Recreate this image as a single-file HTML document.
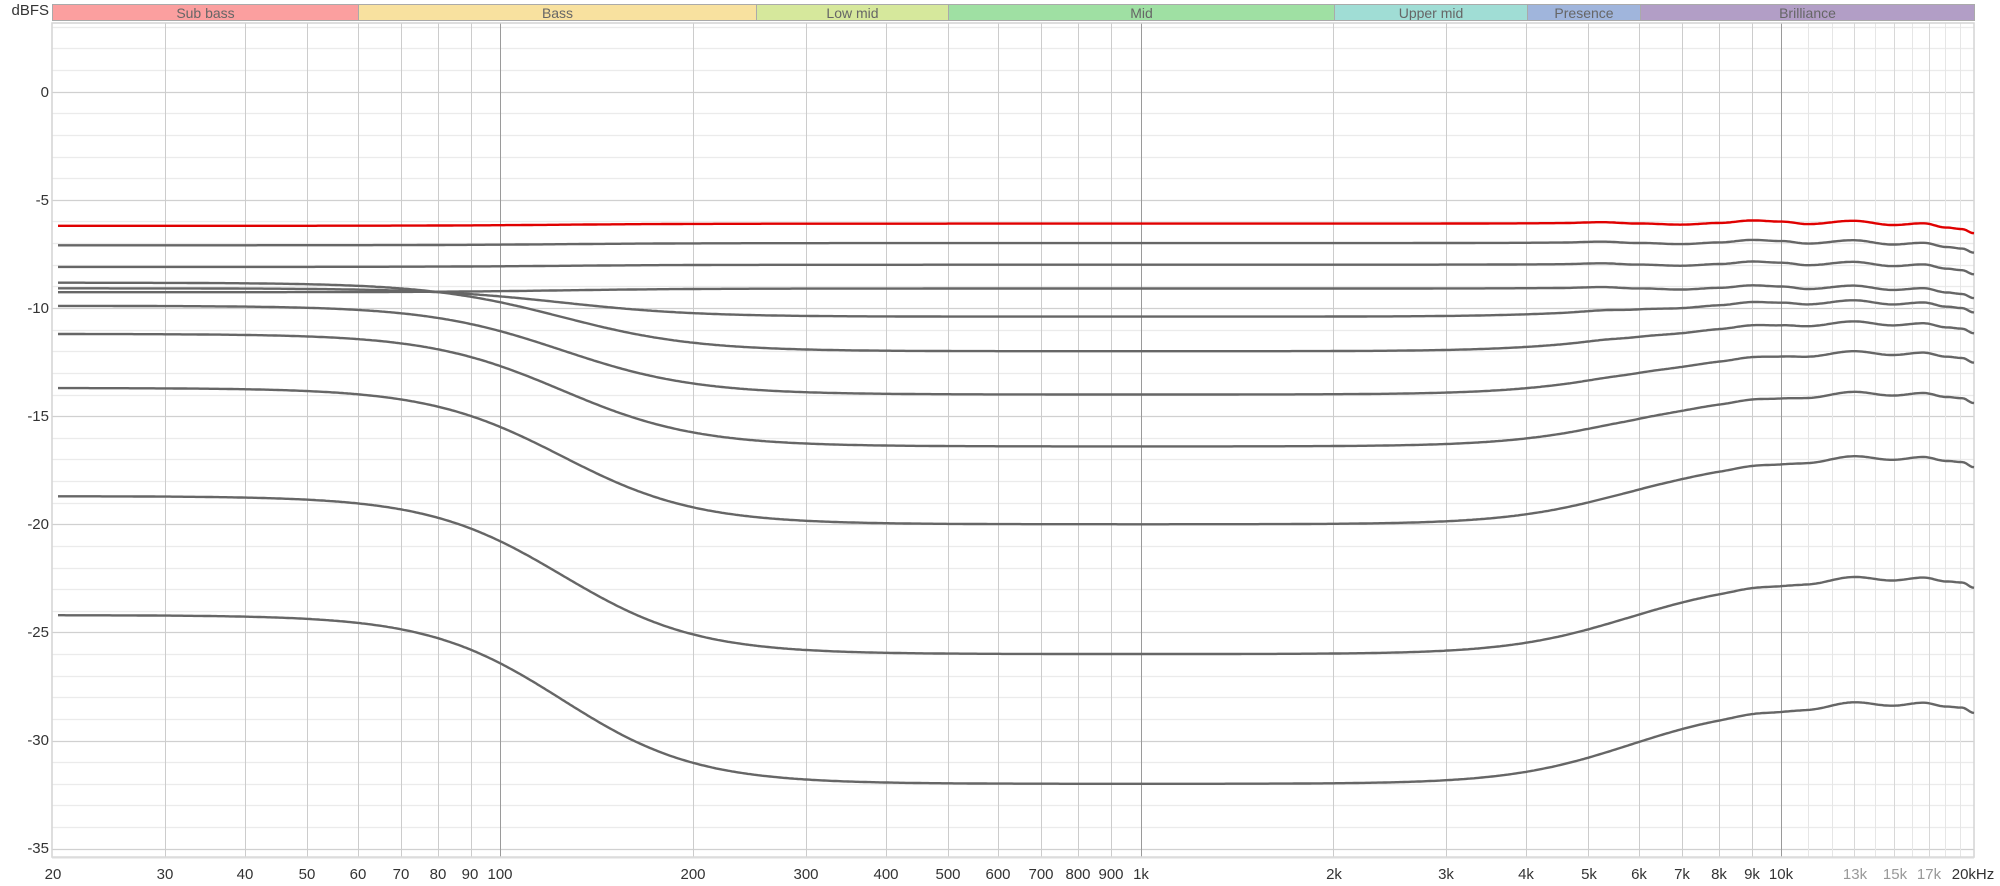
<!DOCTYPE html>
<html><head><meta charset="utf-8">
<style>
html,body{margin:0;padding:0;background:#fff;}
body{width:2000px;height:886px;position:relative;overflow:hidden;font-family:"Liberation Sans",sans-serif;}
.yl{position:absolute;right:1951px;font-size:15px;color:#333;line-height:16px;text-align:right;white-space:nowrap}
.xl{position:absolute;top:866px;font-size:15px;color:#333;line-height:18px;transform:translateX(-50%);white-space:nowrap}
.g{color:#999}
.band{position:absolute;top:4px;height:15px;border:1px solid #aaa;box-sizing:content-box;font-size:14px;color:#666;text-align:center;line-height:16px;overflow:hidden}
svg{position:absolute;left:0;top:0}
</style></head><body>
<svg id="s" width="2000" height="886" viewBox="0 0 2000 886"></svg>
<div class="yl" style="top:3px">dBFS</div>
<div class="yl" style="top:85px">0</div>
<div class="yl" style="top:193px">-5</div>
<div class="yl" style="top:301px">-10</div>
<div class="yl" style="top:409px">-15</div>
<div class="yl" style="top:517px">-20</div>
<div class="yl" style="top:625px">-25</div>
<div class="yl" style="top:733px">-30</div>
<div class="yl" style="top:841px">-35</div>

<div class="band" style="left:52px;width:305px;background:#fb9f9f">Sub bass</div>
<div class="band" style="left:358px;width:397px;background:#f8e19f">Bass</div>
<div class="band" style="left:756px;width:191px;background:#d6e89c">Low mid</div>
<div class="band" style="left:948px;width:385px;background:#9fe0a3">Mid</div>
<div class="band" style="left:1334px;width:192px;background:#a0ddd5">Upper mid</div>
<div class="band" style="left:1527px;width:112px;background:#a0b5dc">Presence</div>
<div class="band" style="left:1640px;width:333px;background:#b29ec6">Brilliance</div>

<div class="xl" style="left:53px">20</div>
<div class="xl" style="left:165px">30</div>
<div class="xl" style="left:245px">40</div>
<div class="xl" style="left:307px">50</div>
<div class="xl" style="left:358px">60</div>
<div class="xl" style="left:401px">70</div>
<div class="xl" style="left:438px">80</div>
<div class="xl" style="left:470px">90</div>
<div class="xl" style="left:500px">100</div>
<div class="xl" style="left:693px">200</div>
<div class="xl" style="left:806px">300</div>
<div class="xl" style="left:886px">400</div>
<div class="xl" style="left:948px">500</div>
<div class="xl" style="left:998px">600</div>
<div class="xl" style="left:1041px">700</div>
<div class="xl" style="left:1078px">800</div>
<div class="xl" style="left:1111px">900</div>
<div class="xl" style="left:1141px">1k</div>
<div class="xl" style="left:1334px">2k</div>
<div class="xl" style="left:1446px">3k</div>
<div class="xl" style="left:1526px">4k</div>
<div class="xl" style="left:1589px">5k</div>
<div class="xl" style="left:1639px">6k</div>
<div class="xl" style="left:1682px">7k</div>
<div class="xl" style="left:1719px">8k</div>
<div class="xl" style="left:1752px">9k</div>
<div class="xl" style="left:1781px">10k</div>
<div class="xl g" style="left:1855px">13k</div>
<div class="xl g" style="left:1895px">15k</div>
<div class="xl g" style="left:1929px">17k</div>
<div class="xl" style="left:1973px">20kHz</div>

<script>
(function(){
var s=document.getElementById('s');var h='';
function X(f){return 52+640.7*Math.log10(f/20);}
function Y(d){return 91.7-21.63*d;}
for(var d=3;d>=-35;d--){var y=Math.round(Y(d))+0.5;var c=(d%5==0)?'#d0d0d0':'#ebebeb';
h+='<line x1="52" x2="1974" y1="'+y+'" y2="'+y+'" stroke="'+c+'" stroke-width="1.3"/>';}
var fs=[30,40,50,60,70,80,90,100,200,300,400,500,600,700,800,900,1000,2000,3000,4000,5000,6000,7000,8000,9000,10000];
fs.forEach(function(f){var x=Math.round(X(f))+0.5;var c=(f==100||f==1000||f==10000)?'#9a9a9a':'#cccccc';
h+='<line x1="'+x+'" x2="'+x+'" y1="23" y2="857" stroke="'+c+'" stroke-width="1"/>';});
for(var f=11000;f<20000;f+=1000){var x=Math.round(X(f))+0.5;var c=(f==13000||f==15000||f==17000)?'#d8d8d8':'#e6e6e6';
h+='<line x1="'+x+'" x2="'+x+'" y1="23" y2="857" stroke="'+c+'" stroke-width="1"/>';}
h+='<rect x="52" y="23" width="1922" height="834" fill="none" stroke="#d4d4d4" stroke-width="1.5"/>';
h+='<line x1="52" x2="1974" y1="857.5" y2="857.5" stroke="#dcdcdc" stroke-width="2"/>';
var xs=[1560,1600,1639,1682,1720,1752,1782,1808,1853,1893,1923,1947,1962,1974];
var rA=[0,0.03,-0.05,-0.12,-0.05,0.06,0,-0.12,0.03,-0.17,-0.09,-0.29,-0.36,-0.55];
var rB=[0,0,0,0,0,0.05,0,0,0.26,0.06,0.18,-0.01,-0.06,-0.31];
function ip(arr,x){if(x<=xs[0])return 0;for(var i=1;i<xs.length;i++){if(x<=xs[i]){var t=(x-xs[i-1])/(xs[i]-xs[i-1]);t=(1-Math.cos(Math.PI*t))/2;return arr[i-1]+(arr[i]-arr[i-1])*t;}}return arr[arr.length-1];}
var cs=[[-7.1,-7.0,0.1],[-8.1,-8.0,0.1],[-9.27,-9.1,0.1],[-9.09,-10.4,0.7],[-8.83,-12.0,1.3],[-9.9,-14.0,1.9],[-11.2,-16.4,2.4],[-13.7,-20.0,3.0],[-18.7,-26.0,3.4],[-24.2,-32.0,3.6]];
function path(c,red){var p='';var m=Math.min(1,c[2]/3.6);for(var x=58;x<=1974;x+=2){var lf=Math.log10(20)+(x-52)/640.7;
var lo=0.5*(1+Math.tanh((lf-Math.log10(125))/0.21));
var hi=0.5*(1+Math.tanh((lf-Math.log10(5800))/0.19));
var d=c[0]+(c[1]-c[0])*lo+c[2]*hi;
d+=ip(rA,x)*(1-m)+ip(rB,x)*m;
p+=(x==58?'M':'L')+x+' '+Y(d).toFixed(1);}
return '<path d="'+p+'" fill="none" stroke="'+(red?'#e00000':'#666666')+'" stroke-width="2.4" stroke-linejoin="round"/>';}
cs.forEach(function(c){h+=path(c,false);});
h+=path([-6.2,-6.1,0.1],true);
s.innerHTML=h;
})();
</script>
</body></html>
